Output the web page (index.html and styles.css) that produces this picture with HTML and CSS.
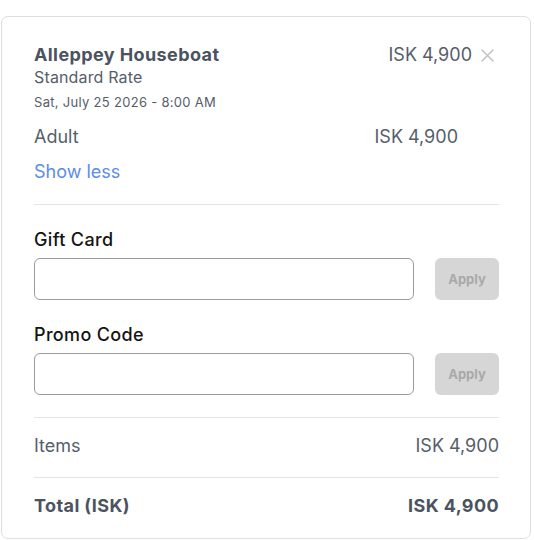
FILE: index.html
```html
<!DOCTYPE html>
<html lang="en">

<head>
    <meta charset="UTF-8">
    <meta name="viewport" content="width=device-width, initial-scale=1.0">
    <title>Cart Summary</title>
    <link rel="stylesheet" href="styles.css">
</head>

<body>

    <div class="card">

        <div class="item-head">
            <div class="item-info">
                <div class="item-title">Alleppey Houseboat</div>
                <div class="item-rate">Standard Rate</div>
                <div class="item-date">Sat, July 25 2026 - 8:00 AM</div>
            </div>
            <div class="item-price">
                <span>ISK 4,900</span>
                <svg class="remove" width="13" height="13" viewBox="0 0 13 13">
                    <path d="M1 1 L12 12 M12 1 L1 12" stroke="#c4c4c4" stroke-width="1.6" stroke-linecap="round" />
                </svg>
            </div>
        </div>

        <div class="line-row">
            <span>Adult</span>
            <span>ISK 4,900</span>
        </div>

        <a class="toggle" href="#">Show less</a>

        <hr class="divider first">

        <div class="code-field">
            <label>Gift Card</label>
            <div class="code-row">
                <input type="text">
                <button type="button">Apply</button>
            </div>
        </div>

        <div class="code-field">
            <label>Promo Code</label>
            <div class="code-row">
                <input type="text">
                <button type="button">Apply</button>
            </div>
        </div>

        <hr class="divider">

        <div class="sum-row items">
            <span>Items</span>
            <span>ISK 4,900</span>
        </div>

        <hr class="divider last">

        <div class="sum-row total">
            <span>Total (ISK)</span>
            <span>ISK 4,900</span>
        </div>

    </div>

</body>

</html>
```

FILE: styles.css
```css
body {
    margin: 0;
    padding: 16px 3px 0 1px;
    background: #fff;
    font-family: Inter, 'Liberation Sans', sans-serif;
    color: #565e6a;
}

.card {
    border: 1px solid #dedede;
    border-radius: 7px;
    padding: 28px 31px 21px 32px;
}

.item-head {
    display: flex;
    justify-content: space-between;
    align-items: flex-start;
}

.item-title {
    font-size: 18px;
    line-height: 20px;
    font-weight: 700;
    letter-spacing: 0.4px;
    color: #4b535f;
}

.item-rate {
    font-size: 16px;
    line-height: 20px;
    letter-spacing: 0.15px;
    margin-top: 2px;
}

.item-date {
    font-size: 13px;
    line-height: 16px;
    letter-spacing: 0.3px;
    margin-top: 7px;
}

.item-price {
    display: flex;
    align-items: center;
    gap: 9px;
    font-size: 18px;
    line-height: 20px;
    padding-right: 5px;
}

.line-row {
    display: flex;
    justify-content: space-between;
    font-size: 18px;
    line-height: 20px;
    margin-top: 17px;
    padding-right: 41px;
}

.toggle {
    display: block;
    margin-top: 15px;
    font-size: 18px;
    line-height: 20px;
    color: #5b8de8;
    text-decoration: none;
}

.divider {
    border: none;
    border-top: 1px solid #e4e4e4;
    margin: 22px 0 0 0;
}

.divider.last {
    margin-top: 21px;
}

.code-field {
    margin-top: 25px;
}

.code-field label {
    display: block;
    font-size: 18px;
    line-height: 20px;
    font-weight: 500;
    letter-spacing: 0.35px;
    color: #141414;
}

.code-row {
    display: flex;
    gap: 21px;
    margin-top: 8px;
}

.code-row input {
    flex: 1;
    height: 42px;
    box-sizing: border-box;
    border: 1px solid #9b9b9b;
    border-radius: 6px;
    margin: 0;
}

.code-row button {
    width: 64px;
    height: 42px;
    border: none;
    border-radius: 6px;
    background: #d6d6d6;
    color: #a9a9a9;
    font-family: Inter, 'Liberation Sans', sans-serif;
    font-size: 13px;
    font-weight: 700;
    padding: 0;
}

.sum-row {
    display: flex;
    justify-content: space-between;
    font-size: 18px;
    line-height: 20px;
}

.sum-row.items {
    margin-top: 18px;
}

.sum-row.total {
    margin-top: 18px;
    margin-bottom: 1px;
    font-weight: 700;
    letter-spacing: 0.4px;
    color: #4b535f;
}
```
